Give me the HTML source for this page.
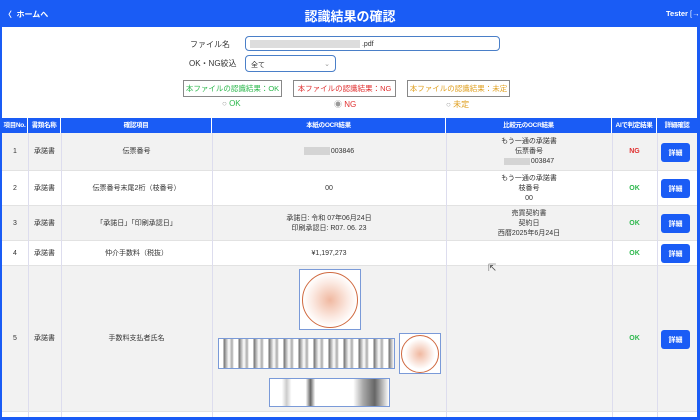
<!DOCTYPE html>
<html><head><meta charset="utf-8"><style>
*{margin:0;padding:0;box-sizing:border-box}
body{width:700px;height:420px;overflow:hidden;background:#1a5cf5;font-family:"Liberation Sans","Noto Sans CJK JP",sans-serif;position:relative;color:#333}
.a{position:absolute;white-space:nowrap}
#main{position:absolute;left:2px;top:27px;width:695px;height:390px;background:#fff;overflow:hidden}
.hdr{color:#fff;font-weight:bold}
.c{position:absolute;display:flex;flex-direction:column;align-items:center;justify-content:center;text-align:center;font-size:7px;line-height:10px;color:#333;white-space:nowrap}
.th{background:#1a5cf5;color:#fff;font-weight:bold;height:15px;border-right:1px solid #fff;font-size:6.5px;letter-spacing:-0.3px}
.btn{position:absolute;width:29px;height:19px;background:#1a5cf5;border-radius:3px;color:#fff;font-size:7px;display:flex;align-items:center;justify-content:center;font-weight:bold}
.row{position:absolute;left:0;width:695px;border-bottom:1px solid #e2e2e2}
.blur{display:inline-block;background:#d4d4d4;width:26px;height:8px;margin-right:1px;vertical-align:middle}
</style></head><body>
<div class="a hdr" style="left:4px;top:9px;font-size:8px">〈&nbsp; ホームへ</div>
<div class="a hdr" style="left:0;width:700px;top:6px;text-align:center;font-size:13px">認識結果の確認</div>
<div class="a hdr" style="left:666px;top:9px;font-size:7.5px">Tester <span style="font-weight:normal">[→</span></div>
<div id="main">
<div class="a" style="left:188px;top:12px;font-size:8px">ファイル名</div>
<div class="a" style="left:243px;top:9px;width:255px;height:15px;border:1px solid #4a7fc8;border-radius:4px;font-size:7px;padding:3px 4px"><span style="display:inline-block;width:110px;height:8px;background:#ddd;vertical-align:middle"></span> .pdf</div>
<div class="a" style="left:187px;top:31px;font-size:8px">OK・NG絞込</div>
<div class="a" style="left:243px;top:28px;width:91px;height:17px;border:1px solid #4a7fc8;border-radius:4px;font-size:7px;padding:4px 5px">全て<span style="float:right;color:#999">⌄</span></div>
<div class="a" style="left:181px;top:53px;width:99px;height:17px;border:1px solid #888;font-size:7.5px;color:#2db84d;text-align:center;line-height:15px">本ファイルの認識結果：OK</div>
<div class="a" style="left:291px;top:53px;width:103px;height:17px;border:1px solid #888;font-size:7.5px;color:#e03030;text-align:center;line-height:15px">本ファイルの認識結果：NG</div>
<div class="a" style="left:405px;top:53px;width:103px;height:17px;border:1px solid #888;font-size:7.5px;color:#e0a020;text-align:center;line-height:15px">本ファイルの認識結果：未定</div>
<div class="a" style="left:220px;top:72px;font-size:8px;color:#2db84d"><span style="color:#999">○</span> OK</div>
<div class="a" style="left:332px;top:72px;font-size:8px;color:#e03030"><span style="color:#999">◉</span> NG</div>
<div class="a" style="left:444px;top:72px;font-size:8px;color:#e0a020"><span style="color:#999">○</span> 未定</div>

<div class="a" style="left:0;top:91px;width:695px;height:15px;background:#1a5cf5"></div>
<div class="c th" style="left:0;top:91px;width:26px">項目No.</div>
<div class="c th" style="left:26px;top:91px;width:33px">書類名称</div>
<div class="c th" style="left:59px;top:91px;width:151px">確認項目</div>
<div class="c th" style="left:210px;top:91px;width:234px">本紙のOCR結果</div>
<div class="c th" style="left:444px;top:91px;width:166px">比較元のOCR結果</div>
<div class="c th" style="left:610px;top:91px;width:45px">AIで判定結果</div>
<div class="c th" style="left:655px;top:91px;width:40px;border:none">詳細確認</div>

<div class="row" style="top:106px;height:38px;background:#f2f2f2"></div>
<div class="row" style="top:144px;height:35px;background:#fff"></div>
<div class="row" style="top:179px;height:35px;background:#f2f2f2"></div>
<div class="row" style="top:214px;height:25px;background:#fff"></div>
<div class="row" style="top:239px;height:146px;background:#f2f2f2"></div>
<div class="row" style="top:385px;height:10px;background:#fff"></div>

<div class="a" style="left:26px;top:106px;width:1px;height:290px;background:#dde"></div>
<div class="a" style="left:59px;top:106px;width:1px;height:290px;background:#dde"></div>
<div class="a" style="left:210px;top:106px;width:1px;height:290px;background:#dde"></div>
<div class="a" style="left:444px;top:106px;width:1px;height:290px;background:#dde"></div>
<div class="a" style="left:610px;top:106px;width:1px;height:290px;background:#dde"></div>
<div class="a" style="left:655px;top:106px;width:1px;height:290px;background:#dde"></div>

<div class="c" style="left:0;top:106px;width:26px;height:38px">1</div>
<div class="c" style="left:26px;top:106px;width:33px;height:38px">承諾書</div>
<div class="c" style="left:59px;top:106px;width:151px;height:38px">伝票番号</div>
<div class="c" style="left:210px;top:106px;width:234px;height:38px"><div><span class="blur"></span>003846</div></div>
<div class="c" style="left:444px;top:106px;width:166px;height:38px"><div>もう一通の承諾書</div><div>伝票番号</div><div><span class="blur" style="height:7px"></span>003847</div></div>
<div class="c" style="left:610px;top:106px;width:45px;height:38px;color:#e03030;font-weight:bold">NG</div>
<div class="btn" style="left:659px;top:116px">詳細</div>

<div class="c" style="left:0;top:144px;width:26px;height:35px">2</div>
<div class="c" style="left:26px;top:144px;width:33px;height:35px">承諾書</div>
<div class="c" style="left:59px;top:144px;width:151px;height:35px">伝票番号末尾2桁（枝番号）</div>
<div class="c" style="left:210px;top:144px;width:234px;height:35px">00</div>
<div class="c" style="left:444px;top:144px;width:166px;height:35px"><div>もう一通の承諾書</div><div>枝番号</div><div>00</div></div>
<div class="c" style="left:610px;top:144px;width:45px;height:35px;color:#2db84d;font-weight:bold">OK</div>
<div class="btn" style="left:659px;top:152px">詳細</div>

<div class="c" style="left:0;top:179px;width:26px;height:35px">3</div>
<div class="c" style="left:26px;top:179px;width:33px;height:35px">承諾書</div>
<div class="c" style="left:59px;top:179px;width:151px;height:35px">「承諾日」「印刷承認日」</div>
<div class="c" style="left:210px;top:179px;width:234px;height:35px"><div>承諾日: 令和 07年06月24日</div><div>印刷承認日: R07. 06. 23</div></div>
<div class="c" style="left:444px;top:179px;width:166px;height:35px"><div>売買契約書</div><div>契約日</div><div>西暦2025年6月24日</div></div>
<div class="c" style="left:610px;top:179px;width:45px;height:35px;color:#2db84d;font-weight:bold">OK</div>
<div class="btn" style="left:659px;top:187px">詳細</div>

<div class="c" style="left:0;top:214px;width:26px;height:25px">4</div>
<div class="c" style="left:26px;top:214px;width:33px;height:25px">承諾書</div>
<div class="c" style="left:59px;top:214px;width:151px;height:25px">仲介手数料（税抜）</div>
<div class="c" style="left:210px;top:214px;width:234px;height:25px">¥1,197,273</div>
<div class="c" style="left:610px;top:214px;width:45px;height:25px;color:#2db84d;font-weight:bold">OK</div>
<div class="btn" style="left:659px;top:217px">詳細</div>

<div class="c" style="left:0;top:239px;width:26px;height:146px">5</div>
<div class="c" style="left:26px;top:239px;width:33px;height:146px">承諾書</div>
<div class="c" style="left:59px;top:239px;width:151px;height:146px">手数料支払者氏名</div>
<div class="c" style="left:610px;top:239px;width:45px;height:146px;color:#2db84d;font-weight:bold">OK</div>
<div class="btn" style="left:659px;top:303px">詳細</div>
<div class="a" style="left:297px;top:242px;width:62px;height:61px;border:1px solid #7a9ad8;background:#fff"><div style="margin:2px;width:56px;height:56px;border:1.5px solid #d06a40;border-radius:50%;background:radial-gradient(circle,#f0b8a0 0,#fbe8e0 45%,#fff 70%)"></div></div>
<div class="a" style="left:216px;top:311px;width:177px;height:31px;border:1px solid #7a9ad8;background:repeating-linear-gradient(90deg,#fff 0,#fff 4px,#777 5px,#ccc 8px,#fff 10px,#aaa 13px,#fff 15px)"></div>
<div class="a" style="left:397px;top:306px;width:42px;height:41px;border:1px solid #7a9ad8;background:#fff"><div style="margin:1px;width:38px;height:38px;border:1.5px solid #d06a40;border-radius:50%;background:radial-gradient(circle,#f0b8a0 0,#fff 60%)"></div></div>
<div class="a" style="left:267px;top:351px;width:121px;height:29px;border:1px solid #7a9ad8;background:linear-gradient(90deg,#fff 10%,#ccc 14%,#fff 18%,#fff 30%,#666 34%,#fff 38%,#fff 70%,#aaa 78%,#666 88%,#fff 100%)"></div>
<div class="a" style="left:486px;top:236px;font-size:10px;color:#555">⇱</div>
</div>
</body></html>
